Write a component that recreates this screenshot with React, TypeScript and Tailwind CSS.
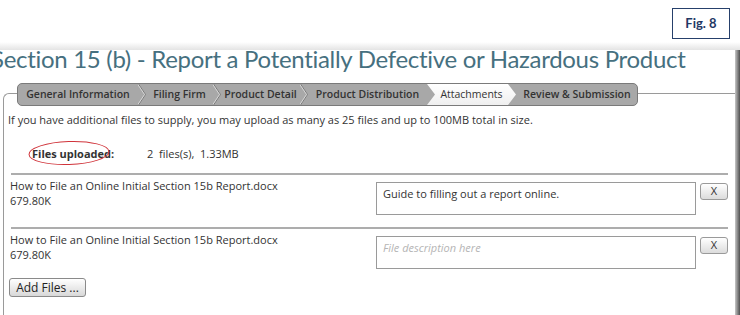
import React from "react";

const body = { fontFamily: '"Open Sans", "DejaVu Sans", sans-serif' };

function Chevron() {
  return (
    <svg width="8" height="21" viewBox="0 0 8 21" className="block shrink-0">
      <polyline points="0.5,0 7.5,10.5 0.5,21" fill="none" stroke="#7d7d7d" strokeWidth="1" />
      <polyline points="-0.5,0 6.5,10.5 -0.5,21" fill="none" stroke="#d6d6d6" strokeWidth="1" />
    </svg>
  );
}

function Tab({ w, label }: { w: number; label: string }) {
  return (
    <div className="flex h-[21px] items-center justify-center shrink-0" style={{ width: w }}>
      <span className="text-[10.5px] font-semibold text-[#333] whitespace-nowrap">{label}</span>
    </div>
  );
}

function FileRow({ desc }: { desc?: string }) {
  return (
    <div className="flex h-[52px]">
      <div className="w-[372px] pl-[6px] pt-[3px] text-[11px] leading-[15px] text-[#333]">
        <div>How to File an Online Initial Section 15b Report.docx</div>
        <div>679.80K</div>
      </div>
      <div className="mt-[7px] w-[320px] h-[33px] border border-[#9a9a9a] px-[6px] pt-[3px] text-[11px] leading-[15px]">
        {desc ? (
          <span className="text-[#333]">{desc}</span>
        ) : (
          <span className="text-[#b5b5b5] italic">File description here</span>
        )}
      </div>
      <div className="ml-[4px] mt-[8px] w-[28px] h-[17px] border border-[#9a9a9a] rounded-[3px] bg-gradient-to-b from-white to-[#dcdcdc] flex items-center justify-center text-[11px] text-[#333]">
        X
      </div>
    </div>
  );
}

export default function App() {
  return (
    <div className="w-[740px] h-[315px] bg-white overflow-hidden flex flex-col" style={body}>
      <div className="h-[42px] flex justify-end pr-[10px] pt-[8px] shrink-0">
        <div
          className="w-[58px] h-[31px] border border-[#26406b] flex items-center justify-center text-[13px] font-bold text-[#1f3864]"
          style={{ fontFamily: 'Lato, "Liberation Sans", sans-serif' }}
        >
          Fig. 8
        </div>
      </div>
      <div className="h-[8px] bg-gradient-to-b from-white to-[#e4e4e4] shrink-0" />
      <div className="flex flex-1 min-h-0">
        <div className="flex-1 min-w-0 flex flex-col">
          <div
            className="h-[30px] -mt-[4px] ml-[-9px] whitespace-nowrap text-[24px] leading-[26px] tracking-[-0.3px] text-[#46707f]"
            style={{ fontFamily: 'Lato, "Open Sans", sans-serif' }}
          >
            Section 15 (b) - Report a Potentially Defective or Hazardous Product
          </div>
          <div className="ml-[3px] mt-[17px] flex-1 border-l border-t border-[#9a9a9a] rounded-tl-[6px]">
            <div className="-mt-[11px] ml-[13px] flex w-[621px] h-[23px] border border-[#7a7a7a] rounded-[5px] bg-[#a8a8a8] overflow-hidden">
              <Tab w={120} label="General Information" />
              <Chevron />
              <Tab w={67} label="Filing Firm" />
              <Chevron />
              <Tab w={79} label="Product Detail" />
              <Chevron />
              <Tab w={119} label="Product Distribution" />
              <div className="w-[89px] h-[21px] shrink-0 flex items-center justify-center bg-gradient-to-b from-white to-[#efefef] [clip-path:polygon(0_0,calc(100%-8px)_0,100%_50%,calc(100%-8px)_100%,0_100%,8px_50%)]">
                <span className="text-[10.5px] text-[#333] whitespace-nowrap">Attachments</span>
              </div>
              <Tab w={122} label="Review & Submission" />
            </div>
            <div className="pl-[4px] pt-[6px] text-[11px] leading-[15px] text-[#333] whitespace-nowrap">
              If you have additional files to supply, you may upload as many as 25 files and up to 100MB total in size.
            </div>
            <div className="flex items-center h-[33px] mt-[11px] pl-[28px] text-[11px] text-[#333]">
              <div className="relative w-[115px]">
                <span className="font-bold">Files uploaded:</span>
                <svg className="absolute left-[-4px] top-[-6px]" width="84" height="26" viewBox="0 0 84 26">
                  <ellipse cx="41" cy="13" rx="40" ry="11.5" fill="none" stroke="#d0343b" strokeWidth="1" transform="rotate(-2 41 13)" />
                </svg>
              </div>
              <span>2&nbsp; files(s),&nbsp; 1.33MB</span>
            </div>
            <div className="ml-[7px] mr-[7px] h-[2px] bg-[#adadad] mt-[2px]" />
            <FileRow desc="Guide to filling out a report online." />
            <div className="ml-[7px] mr-[7px] h-[2px] bg-[#adadad]" />
            <FileRow />
            <div className="pl-[5px] -mt-[3px]">
              <div className="w-[77px] h-[19px] border border-[#8a8a8a] rounded-[3px] bg-gradient-to-b from-white to-[#d8d8d8] flex items-center justify-center text-[12px] text-[#222]">
                Add Files ...
              </div>
            </div>
          </div>
        </div>
        <div className="w-[5px] bg-gradient-to-r from-[#c8c8c8] to-[#505050]" />
      </div>
    </div>
  );
}
